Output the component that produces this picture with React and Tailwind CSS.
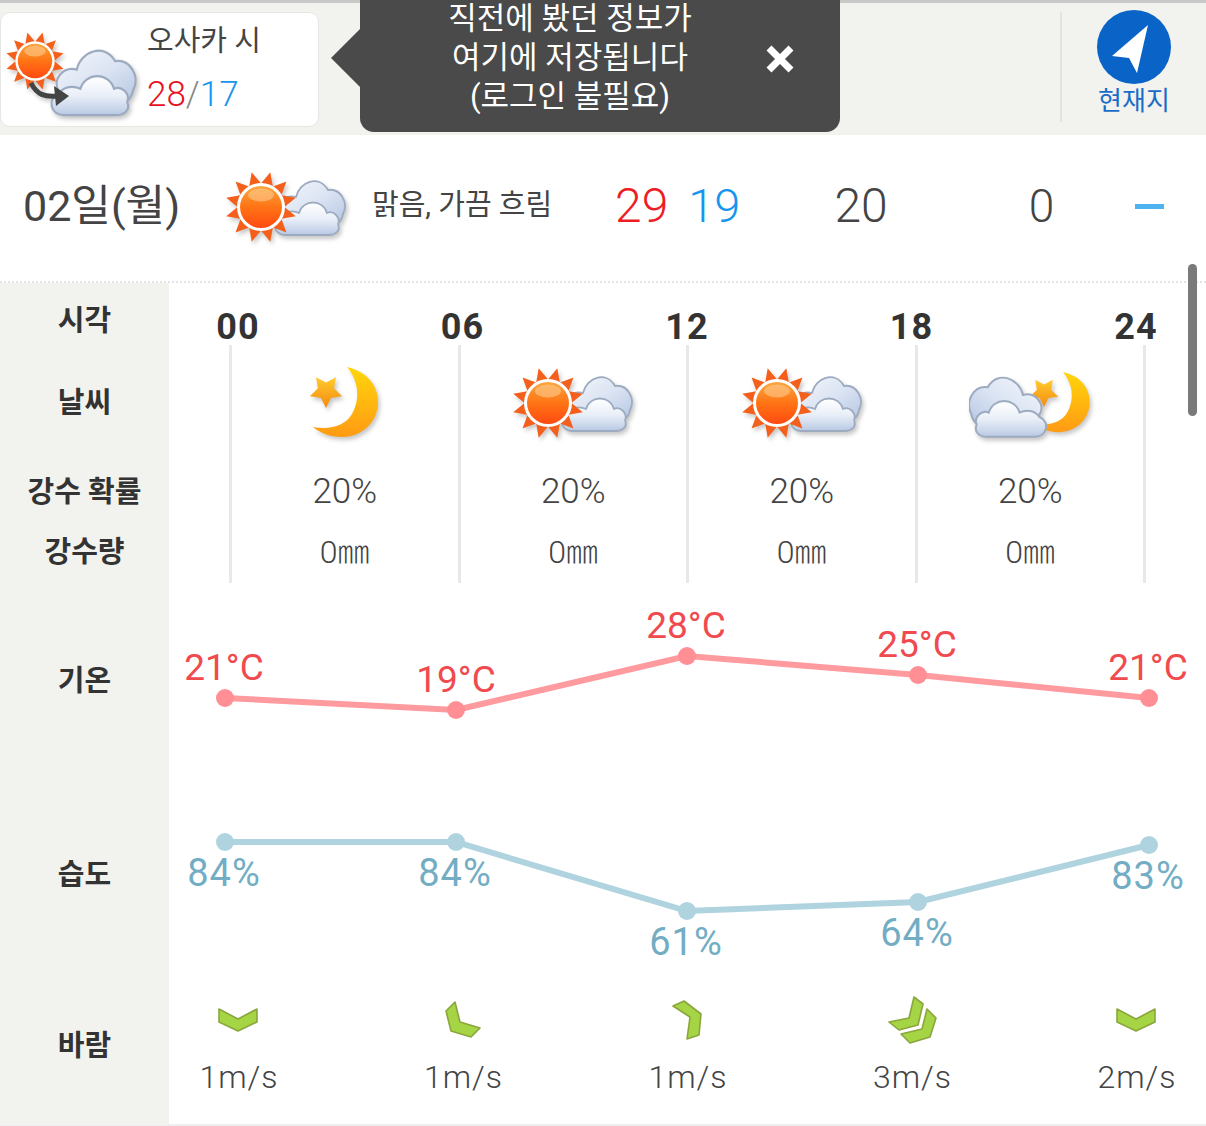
import React from "react"

const font = "font-['Roboto','Noto_Sans_CJK_KR',sans-serif]"
const hours = ["00", "06", "12", "18", "24"]
const temps = [
    { x: 225, y: 698, tx: 224, t: "21°C" },
    { x: 456, y: 710, tx: 456, t: "19°C" },
    { x: 687, y: 656, tx: 686, t: "28°C" },
    { x: 918, y: 675, tx: 917, t: "25°C" },
    { x: 1149, y: 698, tx: 1148, t: "21°C" },
]
const humid = [
    { x: 225, y: 842, tx: 224, t: "84%", ty: 886 },
    { x: 456, y: 842, tx: 455, t: "84%", ty: 886 },
    { x: 687, y: 911, tx: 686, t: "61%", ty: 955 },
    { x: 918, y: 902, tx: 917, t: "64%", ty: 946 },
    { x: 1149, y: 845, tx: 1148, t: "83%", ty: 889 },
]
const winds = [
    { label: "1m/s", polys: ["-19,-11 0,-1 19,-11 19,2 0,11 -19,2"] },
    { label: "1m/s", polys: ["-8,-18 -17,-9 -12,11 8,17 17,8 -3,2"] },
    { label: "1m/s", polys: ["-14,-14 -3,-19 14,-6 12,15 0,19 3,-3"] },
    { label: "3m/s", polys: ["2,-23 11,-16 6,5 -13,10 -23,2 -3,-2", "15,-11 24,-2 18,17 -2,23 -11,14 10,9"] },
    { label: "2m/s", polys: ["-19,-11 0,-1 19,-11 19,2 0,11 -19,2"] },
]

const Defs = () => (
    <svg className="absolute w-0 h-0">
        <defs>
            <linearGradient id="sunFill" x1="0" y1="0" x2="0" y2="1">
                <stop offset="0" stopColor="#f9a63f" />
                <stop offset="0.5" stopColor="#ff7414" />
                <stop offset="1" stopColor="#ff4a12" />
            </linearGradient>
            <linearGradient id="cloudBack" x1="0" y1="0" x2="1" y2="1">
                <stop offset="0" stopColor="#f6f8fc" />
                <stop offset="0.5" stopColor="#dbe4f3" />
                <stop offset="1" stopColor="#b3c4e0" />
            </linearGradient>
            <linearGradient id="cloudFront" x1="0" y1="0" x2="0" y2="1">
                <stop offset="0" stopColor="#ffffff" />
                <stop offset="0.5" stopColor="#e9eff8" />
                <stop offset="1" stopColor="#b9c9e4" />
            </linearGradient>
            <linearGradient id="moonFill" x1="0" y1="0" x2="0" y2="1">
                <stop offset="0" stopColor="#ffd60a" />
                <stop offset="1" stopColor="#ff9a14" />
            </linearGradient>
            <linearGradient id="starFill" x1="0" y1="0" x2="0" y2="1">
                <stop offset="0" stopColor="#ffcb2e" />
                <stop offset="1" stopColor="#f58a10" />
            </linearGradient>
        </defs>
    </svg>
)

const Sun = ({ cx, cy, s = 1 }) => (
    <g transform={`translate(${cx} ${cy}) scale(${s})`}>
        {[...Array(12)].map((_, i) => (
            <polygon key={i} points="-6,-23 6,-23 0,-36" fill="#f4601c" transform={`rotate(${15 + i * 30})`} />
        ))}
        <circle r="24" fill="#fff" />
        <circle r="21" fill="url(#sunFill)" />
        <ellipse cy="-12" rx="13" ry="6.5" fill="#ffc98c" opacity="0.6" />
    </g>
)

const Clouds = ({ transform }) => (
    <g transform={transform} stroke="#9dabc0" strokeWidth="1.8">
        <path fill="url(#cloudBack)" d="M56 46C50 36 60 25 71 28C74 13 94 5 103 21C115 19 124 33 118 45C116 55 108 58 100 58L60 58Z" />
        <path fill="url(#cloudFront)" d="M60 66C49 66 46 52 56 48C60 42 68 41 74 44C78 30 98 30 102 44C108 41 116 48 113 55C116 62 110 66 104 66Z" />
    </g>
)

const Moon = ({ transform }) => (
    <path
        transform={transform}
        fill="url(#moonFill)"
        d="M347 367C368 372 378 386 378 402C378 424 360 437 342 437C330 437 320 433 313 427C330 430 345 426 352 414C361 398 358 380 347 367Z"
    />
)

const Star = ({ cx, cy, r }) => {
    const pts = [...Array(10)].map((_, i) => {
        const a = ((i * 36 + 90) * Math.PI) / 180
        const d = i % 2 ? r * 0.5 : r
        return `${cx + d * Math.cos(a)},${cy + d * Math.sin(a)}`
    })
    return <polygon points={pts.join(" ")} fill="url(#starFill)" />
}

const iconShadow = "drop-shadow-[2px_3px_2px_rgba(0,0,0,0.22)]"

const SunCloud = () => (
    <svg width="122" height="75" viewBox="0 0 122 75" className={iconShadow}>
        <Clouds />
        <Sun cx={36} cy={38} />
    </svg>
)

const MoonStar = () => (
    <svg width="122" height="75" viewBox="284 365 122 75" className={iconShadow}>
        <Moon />
        <Star cx={326} cy={391} r={17} />
    </svg>
)

const CloudMoon = () => (
    <svg width="122" height="75" viewBox="968 365 122 75" className={iconShadow}>
        <Moon transform="translate(1062 372) scale(.86) translate(-347 -367)" />
        <Star cx={1043} cy={392} r={15} />
        <Clouds transform="translate(1100 362) scale(-1.1 1.1) translate(0 2)" />
    </svg>
)

const Wind = ({ polys }) => (
    <svg width="60" height="56" viewBox="-30 -28 60 56">
        {polys.map((p) => (
            <polygon key={p} points={p} fill="#a5d444" stroke="#8ba63c" strokeWidth="1.6" strokeLinejoin="round" />
        ))}
    </svg>
)

const Label = ({ children, className = "" }) => (
    <div className={`w-[169px] shrink-0 bg-[#f2f2ee] flex items-center justify-center text-[29px] font-bold text-[#333] ${className}`}>
        {children}
    </div>
)

const Cells = ({ items, height, label, labelClass = "pt-[4px]" }) => (
    <div className={`flex ${height}`}>
        <Label className={labelClass}>{label}</Label>
        <div className="flex pl-[60px]">
            {items.map((it, i) => (
                <div key={i} className={`flex items-center justify-center border-l-[3px] border-[#e8e8e8] ${i === 3 ? "w-[231.5px] border-r-[3px]" : "w-[228.5px]"}`}>
                    {it}
                </div>
            ))}
        </div>
    </div>
)

const pct = ["20%", "20%", "20%", "20%"].map((p, i) => <span key={i} className="mt-[3px] text-[35px] font-light text-[#444]">{p}</span>)
const mm = ["0㎜", "0㎜", "0㎜", "0㎜"].map((p, i) => <span key={i} className="-mt-[2px] text-[32px] font-light text-[#444]">{p}</span>)

export default function App() {
    return (
        <div className={`${font} relative w-[1206px] h-[1126px] overflow-hidden bg-white`}>
            <Defs />

            <header className="flex items-start h-[135px] border-t-[3px] border-[#c8c8c8] bg-[#f2f2ee]">
                <div className="mt-[9px] flex w-[319px] h-[115px] rounded-[10px] bg-white border border-[#e6e6e2]">
                    <svg width="142" height="114" viewBox="0 12 142 114" className={`shrink-0 ${iconShadow}`}>
                        <Sun cx={34} cy={60} s={0.82} />
                        <Clouds transform="translate(-9.4 35) scale(1.2)" />
                        <path d="M30 82C36 94 44 96 56 95" fill="none" stroke="#444" strokeWidth="5" />
                        <polygon points="53,85 68,95 55,105" fill="#444" />
                    </svg>
                    <div className="flex flex-col pl-[4px]">
                        <span className="mt-[6px] text-[29px] leading-[44px] text-[#444]">오사카 시</span>
                        <span className="mt-[10px] text-[35px] leading-[44px] font-light">
                            <span className="text-[#e8121f]">28</span>
                            <span className="text-[#888]">/</span>
                            <span className="text-[#1795ee]">17</span>
                        </span>
                    </div>
                </div>

                <div className="relative ml-[41px] -mt-[3px] flex w-[480px] h-[132px] rounded-b-[14px] bg-[#4a4a4a] text-white">
                    <div className="absolute -left-[29px] top-[29px] w-0 h-0 border-y-[29px] border-y-transparent border-r-[29px] border-r-[#4a4a4a]" />
                    <div className="w-[420px] pb-[17px] flex flex-col justify-center text-center text-[31px] leading-[39px]">
                        <span>직전에 봤던 정보가</span>
                        <span>여기에 저장됩니다</span>
                        <span>(로그인 불필요)</span>
                    </div>
                    <svg width="28" height="28" viewBox="0 0 28 28" className="mt-[45px] ml-[-14px]">
                        <path d="M3 3L25 25M25 3L3 25" stroke="#fff" strokeWidth="7" />
                    </svg>
                </div>

                <div className="ml-auto mt-[9px] w-[146px] h-[110px] flex flex-col items-center border-l-2 border-[#e2e2de]">
                    <svg width="74" height="74" viewBox="0 0 74 74" className="-mt-[2px]">
                        <circle cx="37" cy="37" r="37" fill="#0a64c8" />
                        <polygon points="51,15 15,46 32,48 40,63" fill="#fff" />
                    </svg>
                    <span className="text-[26px] leading-[34px] text-[#1a6cc8]">현재지</span>
                </div>
            </header>

            <section className="flex items-center h-[148px] pl-[23px] pb-[4px] border-b-2 border-dotted border-[#e4e4e4] text-[#444]">
                <span className="w-[202px] text-[43px]">02일(월)</span>
                <SunCloud />
                <span className="ml-[25px] w-[243px] text-[29px]">맑음, 가끔 흐림</span>
                <span className="text-[48px] font-light text-[#ee1c25]">29</span>
                <span className="ml-[20px] text-[47px] font-light text-[#1795ee]">19</span>
                <span className="ml-[94px] text-[48px] font-light">20</span>
                <span className="ml-[141px] text-[46px] font-light">0</span>
                <div className="ml-[81px] w-[29px] h-[5px] bg-[#4db2ee]" />
            </section>

            <div className="flex h-[62px]">
                <Label className="items-start pt-[17px]">시각</Label>
                <div className="flex flex-1 justify-between pl-[19px] pr-[20px]">
                    {hours.map((h) => (
                        <div key={h} className="w-[100px] pt-[21px] text-center text-[36px] tracking-[1px] leading-[46px] font-bold text-[#333]">{h}</div>
                    ))}
                </div>
            </div>

            <Cells label="날씨" height="h-[114px]" items={[<MoonStar key="a" />, <SunCloud key="b" />, <SunCloud key="c" />, <CloudMoon key="d" />]} />
            <Cells label="강수 확률" height="h-[64px]" items={pct} />
            <Cells label="강수량" height="h-[60px]" labelClass="" items={mm} />

            <div className="flex h-[388px]">
                <div className="w-[169px] shrink-0 flex flex-col">
                    <Label className="h-[194px] pt-[4px]">기온</Label>
                    <Label className="h-[194px] pt-[4px]">습도</Label>
                </div>
                <svg width="1037" height="388" viewBox="169 583 1037 388">
                    <polyline points={temps.map((p) => `${p.x},${p.y}`).join(" ")} fill="none" stroke="#ff9a9e" strokeWidth="6" />
                    {temps.map((p) => (
                        <g key={p.x}>
                            <circle cx={p.x} cy={p.y} r="9" fill="#ff8f95" />
                            <text x={p.tx} y={p.y - 18} textAnchor="middle" fontSize="37" fontWeight="400" fill="#f04a4f">{p.t}</text>
                        </g>
                    ))}
                    <polyline points={humid.map((p) => `${p.x},${p.y}`).join(" ")} fill="none" stroke="#afd3df" strokeWidth="6" />
                    {humid.map((p) => (
                        <g key={p.x}>
                            <circle cx={p.x} cy={p.y} r="9" fill="#afd3df" />
                            <text x={p.tx} y={p.ty} textAnchor="middle" fontSize="38" letterSpacing="1" fontWeight="400" fill="#72adc4">{p.t}</text>
                        </g>
                    ))}
                </svg>
            </div>

            <div className="flex h-[155px] border-b-2 border-[#eeeeee]">
                <Label className="pb-[78px] pt-[76px]">바람</Label>
                <div className="flex flex-1 justify-between pl-[19px] pr-[20px]">
                    {winds.map((w, i) => (
                        <div key={i} className="w-[100px] flex flex-col items-center pt-[21px]">
                            <Wind polys={w.polys} />
                            <span className="mt-[7px] ml-[2px] text-[32px] leading-[44px] font-light tracking-[1px] text-[#444]">{w.label}</span>
                        </div>
                    ))}
                </div>
            </div>

            <div className="absolute left-[1188px] top-[264px] w-[9px] h-[152px] rounded-full bg-[#7a7a7a]" />
        </div>
    )
}
